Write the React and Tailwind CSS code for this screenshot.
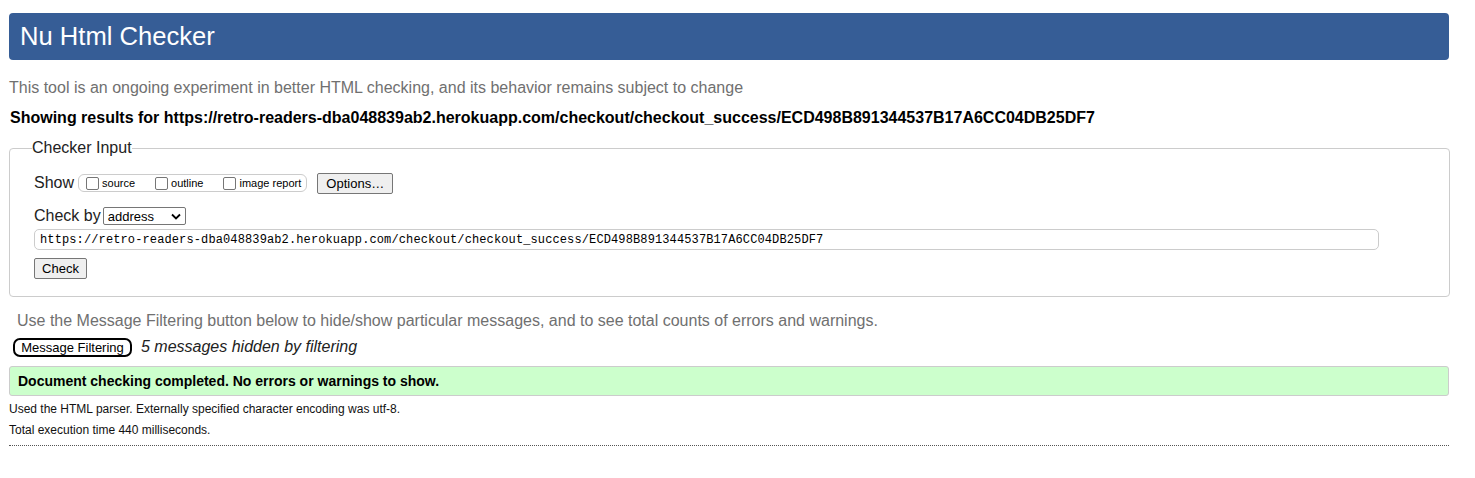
import React from "react";

function Box({ label }) {
  return (
    <label className="flex items-center whitespace-nowrap shrink-0">
      <span className="inline-block w-[13px] h-[13px] border border-[#767676] rounded-[2px] bg-white mr-[3px]"></span>
      <span className="text-[11px] leading-none text-black">{label}</span>
    </label>
  );
}

export default function App() {
  const url =
    "https://retro-readers-dba048839ab2.herokuapp.com/checkout/checkout_success/ECD498B891344537B17A6CC04DB25DF7";
  return (
    <div className="bg-white w-[1475px] h-[478px] font-['Liberation_Sans',Arial,sans-serif] text-black">
      <div className="w-[1440px] ml-[9px] pt-[13px]">
        <div className="h-[47px] bg-[#365d96] rounded-[4px] flex items-center pl-[11px]">
          <h1 className="text-white text-[25.6px] leading-none">Nu Html Checker</h1>
        </div>
        <p className="mt-[19px] text-[16px] leading-[18px] text-[#707070]">
          This tool is an ongoing experiment in better HTML checking, and its behavior remains subject to change
        </p>
        <p className="mt-[12px] ml-[1px] text-[16px] leading-[18px] font-bold">
          Showing results for {url}
        </p>

        <fieldset className="mt-[12px] border border-[#cccccc] rounded-[4px] pl-[24px] pr-[70px] pt-[4px] pb-[17px]">
          <legend className="-ml-[2px] px-0 text-[16px] leading-[18px] text-[#222]">Checker Input</legend>
          <div className="flex items-center h-[22px] mt-[11px]">
            <span className="text-[16px] leading-none text-[#222] mr-[4px]">Show</span>
            <div className="flex items-center shrink-0 whitespace-nowrap h-[18px] border border-[#cccccc] rounded-[6px] pl-[7px] pr-[5px]">
              <Box label="source" />
              <span className="w-[20px]"></span>
              <Box label="outline" />
              <span className="w-[20px]"></span>
              <Box label="image report" />
            </div>
            <button className="ml-[10px] h-[21px] w-[76px] border border-[#767676] rounded-[2px] bg-[#efefef] text-[13px] leading-none text-black">
              Options…
            </button>
          </div>
          <div className="flex items-center h-[20px] mt-[12px]">
            <span className="text-[16px] leading-none text-[#222] mr-[2px]">Check by</span>
            <div className="h-[18px] w-[83px] border border-[#767676] rounded-[2px] flex items-center justify-between pl-[4px] pr-[4px]">
              <span className="text-[13px] leading-none">address</span>
              <svg width="10" height="7" viewBox="0 0 10 7">
                <path d="M1 1.5 L5 5.5 L9 1.5" fill="none" stroke="#000" strokeWidth="1.8" />
              </svg>
            </div>
          </div>
          <div className="mt-[3px] h-[21px] w-[1345px] border border-[#cccccc] rounded-[5px] flex items-center pl-[5px]">
            <span className="font-['Liberation_Mono',monospace] text-[12px] leading-none tracking-[0.12px] text-black">{url}</span>
          </div>
          <button className="mt-[8px] h-[21px] w-[53px] border border-[#767676] rounded-[2px] bg-[#efefef] text-[13px] leading-none text-black block">
            Check
          </button>
        </fieldset>

        <p className="mt-[15px] ml-[8px] text-[16px] leading-[18px] text-[#707070]">
          Use the Message Filtering button below to hide/show particular messages, and to see total counts of errors and warnings.
        </p>
        <div className="flex items-center mt-[7px] ml-[4px] h-[20px]">
          <span className="h-[19px] w-[119px] border-2 border-black rounded-[7px] flex items-center justify-center text-[13px] leading-none">
            Message Filtering
          </span>
          <span className="ml-[9px] text-[16px] leading-none italic text-[#222]">5 messages hidden by filtering</span>
        </div>
        <div className="mt-[9px] h-[30px] bg-[#ccffcc] border border-[#cccccc] rounded-[3px] flex items-center pl-[8px]">
          <span className="text-[14px] leading-none font-bold">Document checking completed. No errors or warnings to show.</span>
        </div>
        <p className="mt-[6px] text-[12px] leading-[14px] text-[#111]">
          Used the HTML parser. Externally specified character encoding was utf-8.
        </p>
        <p className="mt-[7px] text-[12px] leading-[14px] text-[#111]">Total execution time 440 milliseconds.</p>
        <div className="mt-[8px] border-t border-dotted border-[#555]"></div>
      </div>
    </div>
  );
}
